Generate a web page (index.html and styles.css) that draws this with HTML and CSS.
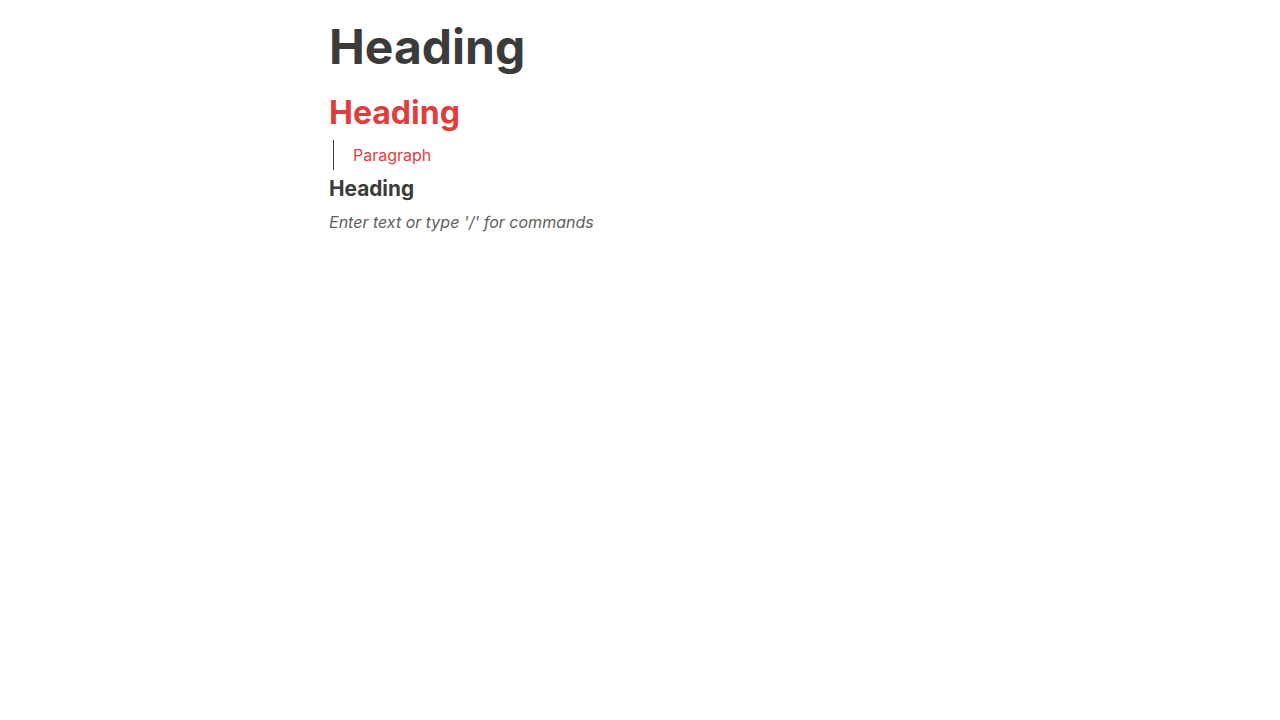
FILE: index.html
```html
<!DOCTYPE html>
<html>
<head>
<meta charset="utf-8">
<link rel="stylesheet" href="styles.css">
</head>
<body>
<div class="editor">
  <h1 class="h1">Heading</h1>
  <h2 class="h2">Heading</h2>
  <blockquote class="quote"><p class="quote-text">Paragraph</p></blockquote>
  <h3 class="h3">Heading</h3>
  <p class="placeholder">Enter text or type '/' for commands</p>
</div>
</body>
</html>
```
FILE: styles.css
```css
html, body {
  margin: 0;
  padding: 0;
  background: #ffffff;
}
body {
  font-family: Inter, "Noto Sans", sans-serif;
  color: #3b3b3b;
}
.editor {
  width: 622px;
  margin: 0 auto;
  padding-top: 18px;
  display: flex;
  flex-direction: column;
}
.h1 {
  margin: 0;
  font-size: 48px;
  line-height: 1.2;
  font-weight: 700;
  color: #3b3b3b;
}
.h2 {
  margin: 18px 0 0;
  font-size: 32px;
  line-height: 1.2;
  font-weight: 700;
  color: #e03e3e;
}
.quote {
  margin: 8px 0 0 4px;
  padding: 3px 0 3px 19px;
  border-left: 1px solid #3b3b3b;
}
.quote-text {
  margin: 0;
  font-size: 16px;
  line-height: 24px;
  color: #e03e3e;
}
.h3 {
  margin: 7px 0 0;
  font-size: 20.8px;
  line-height: 1.2;
  font-weight: 700;
  color: #3b3b3b;
}
.placeholder {
  margin: 8px 0 0;
  font-size: 16px;
  line-height: 24px;
  font-style: italic;
  color: #5e5e5e;
}
```
